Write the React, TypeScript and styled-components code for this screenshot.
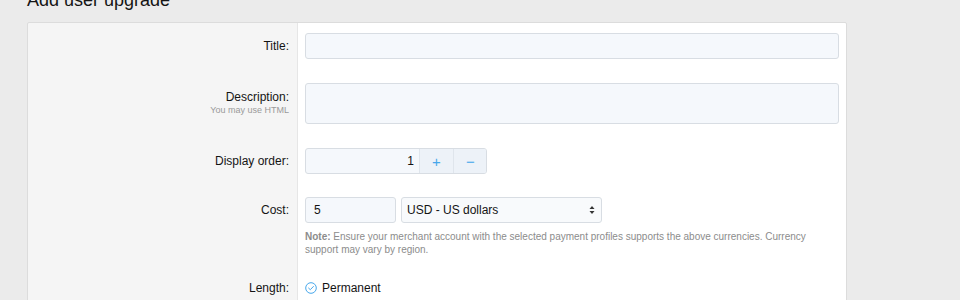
import { FC } from 'react';
import styled, { createGlobalStyle } from 'styled-components';

const GlobalStyle = createGlobalStyle`
  body {
    margin: 0;
    background: #ebebeb;
    font-family: "Liberation Sans", Arial, sans-serif;
    color: #141414;
  }
`;

const Page = styled.div`
  padding: 0 0 0 27px;
  height: 300px;
  overflow: hidden;
`;

const Heading = styled.h1`
  margin: -11px 0 11px 0;
  font-size: 18px;
  line-height: 22px;
  font-weight: 400;
  color: #141414;
`;

const Card = styled.div`
  width: 818px;
  border: 1px solid #dcdcdc;
  border-radius: 2px;
  min-height: 400px;
  display: grid;
  grid-template-columns: 269px 1fr;
  align-content: start;
  background: linear-gradient(to right, #f5f5f5 0 269px, #e6e6e6 269px 270px, #fff 270px);
`;

const Row = styled.div`
  display: contents;
`;

const Label = styled.div<{ $top: number }>`
  padding: ${p => p.$top}px 8px 0 0;
  text-align: right;
  font-size: 12px;
  line-height: 14px;
  color: #141414;
`;

const Hint = styled.div`
  font-size: 9px;
  line-height: 12px;
  color: #9a9a9a;
`;

const Field = styled.div<{ $top?: number; $bottom?: number }>`
  padding: ${p => p.$top ?? 12}px 7px ${p => p.$bottom ?? 12}px 8px;
`;

const TextInput = styled.div<{ $width?: number; $height?: number }>`
  box-sizing: border-box;
  width: ${p => (p.$width ? `${p.$width}px` : '100%')};
  height: ${p => p.$height ?? 26}px;
  border: 1px solid #d8dde3;
  border-radius: 3px;
  background: #f5f8fc;
  font-size: 12px;
  line-height: 24px;
  padding: 0 8px;
  color: #141414;
`;

const SpinBox = styled.div`
  display: flex;
  width: 182px;
  height: 26px;
  box-sizing: border-box;
  border: 1px solid #d8dde3;
  border-radius: 3px;
  background: #f5f8fc;
  overflow: hidden;
`;

const SpinValue = styled.div`
  flex: 0 0 113px;
  text-align: right;
  padding-right: 5px;
  box-sizing: border-box;
  font-size: 12px;
  line-height: 24px;
`;

const SpinButton = styled.div`
  flex: 0 0 34px;
  box-sizing: border-box;
  border-left: 1px solid #dfe5ec;
  background: #edf2f8;
  color: #47a7eb;
  display: flex;
  align-items: center;
  justify-content: center;
  font-size: 15px;
`;

const Inline = styled.div`
  display: flex;
  gap: 5px;
`;

const Select = styled(TextInput)`
  display: flex;
  justify-content: space-between;
  align-items: center;
  padding: 0 6px 0 5px;
  background: #f8fafc;
`;

const Note = styled.p`
  margin: 7px 0 0 0;
  font-size: 10px;
  line-height: 13px;
  color: #8c8c8c;
  max-width: 515px;

  strong {
    font-weight: 700;
  }
`;

const Choice = styled.div`
  display: flex;
  align-items: center;
  gap: 5px;
  font-size: 12px;
  line-height: 16px;
`;

const CheckIcon: FC = () => (
  <svg width="12" height="12" viewBox="0 0 12 12" fill="none">
    <circle cx="6" cy="6" r="5.3" stroke="#47a7eb" strokeWidth="1" />
    <path d="M3.6 6.1 L5.3 7.7 L8.4 4.5" stroke="#47a7eb" strokeWidth="1" strokeLinecap="round" strokeLinejoin="round" />
  </svg>
);

const Arrows: FC = () => (
  <svg width="6" height="10" viewBox="0 0 6 10">
    <path d="M3 1 L5.5 4 H0.5 Z" fill="#333" />
    <path d="M3 9 L5.5 6 H0.5 Z" fill="#333" />
  </svg>
);

const App: FC = () => {
  return (
    <Page>
      <GlobalStyle />
      <Heading>Add user upgrade</Heading>
      <Card>
        <Row>
          <Label $top={16}>Title:</Label>
          <Field $top={10}>
            <TextInput />
          </Field>
        </Row>
        <Row>
          <Label $top={19}>
            Description:
            <Hint>You may use HTML</Hint>
          </Label>
          <Field>
            <TextInput $height={41} />
          </Field>
        </Row>
        <Row>
          <Label $top={18}>Display order:</Label>
          <Field $bottom={11}>
            <SpinBox>
              <SpinValue>1</SpinValue>
              <SpinButton>+</SpinButton>
              <SpinButton>−</SpinButton>
            </SpinBox>
          </Field>
        </Row>
        <Row>
          <Label $top={18}>Cost:</Label>
          <Field>
            <Inline>
              <TextInput $width={91}>5</TextInput>
              <Select $width={201}>
                <span>USD - US dollars</span>
                <Arrows />
              </Select>
            </Inline>
            <Note>
              <strong>Note:</strong> Ensure your merchant account with the selected payment profiles supports the above currencies. Currency support may vary by region.
            </Note>
          </Field>
        </Row>
        <Row>
          <Label $top={13}>Length:</Label>
          <Field>
            <Choice>
              <CheckIcon />
              Permanent
            </Choice>
          </Field>
        </Row>
      </Card>
    </Page>
  );
};

export default App;
